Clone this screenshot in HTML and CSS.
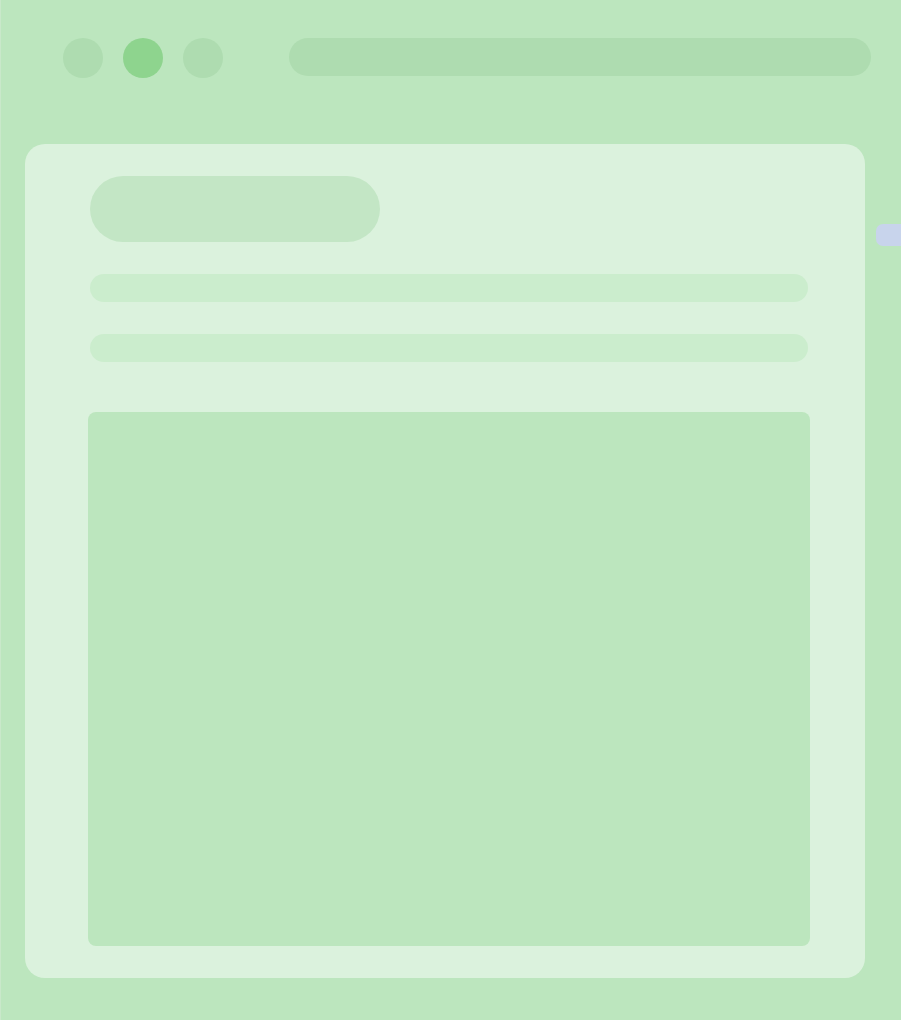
FILE: index.html
```html
<!DOCTYPE html>
<html lang="en">
<head>
<meta charset="utf-8">
<title>Skeleton</title>
<link rel="stylesheet" href="styles.css">
</head>
<body>
<div class="window">
  <header class="toolbar">
    <div class="dots">
      <span class="dot"></span>
      <span class="dot dot-active"></span>
      <span class="dot"></span>
    </div>
    <div class="address"></div>
  </header>
  <main class="card">
    <div class="title-pill"></div>
    <div class="line"></div>
    <div class="line"></div>
    <div class="content-box"></div>
  </main>
  <div class="side-tab"></div>
</div>
</body>
</html>
```
FILE: styles.css
```css
html, body {
  margin: 0;
  padding: 0;
  height: 100%;
  overflow: hidden;
}
body {
  background: #bce6be;
  font-family: "Liberation Sans", Arial, sans-serif;
}
.window {
  position: relative;
  box-sizing: border-box;
  width: 901px;
  height: 1020px;
  border-left: 1px solid #c9e8ca;
}
.toolbar {
  display: flex;
  align-items: flex-start;
  padding: 38px 30px 0 62px;
  height: 40px;
}
.dots {
  display: flex;
  gap: 20px;
}
.dot {
  display: block;
  width: 40px;
  height: 40px;
  border-radius: 50%;
  background: #aedcb0;
}
.dot-active {
  background: #8ed48e;
}
.address {
  flex: 1;
  height: 38px;
  margin-left: 66px;
  border-radius: 19px;
  background: #aedcb0;
}
.card {
  box-sizing: border-box;
  margin: 66px 0 0 24px;
  width: 840px;
  height: 834px;
  padding: 32px 57px 32px 65px;
  border-radius: 20px;
  background: #dbf2dd;
  display: flex;
  flex-direction: column;
}
.title-pill {
  width: 290px;
  height: 66px;
  border-radius: 33px;
  background: #c3e6c5;
}
.line {
  height: 28px;
  margin-top: 32px;
  border-radius: 14px;
  background: #cbedcd;
}
.content-box {
  height: 534px;
  margin: 50px -2px 0 -2px;
  border-radius: 8px;
  background: #bce6be;
}
.side-tab {
  position: absolute;
  left: 875px;
  top: 224px;
  width: 40px;
  height: 22px;
  border-radius: 7px;
  background: #c8d4ec;
}
```
